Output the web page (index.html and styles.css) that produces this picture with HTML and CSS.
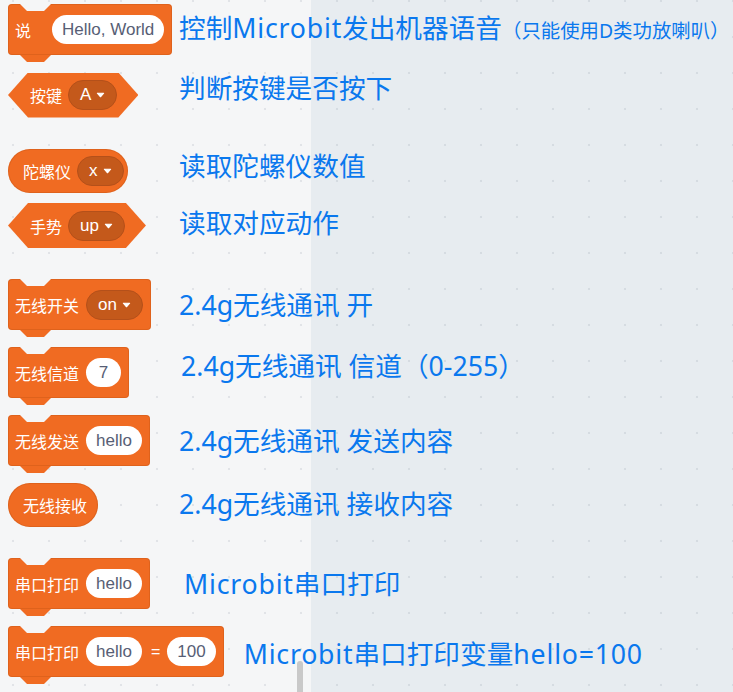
FILE: index.html
```html
<!DOCTYPE html>
<html lang="zh">
<head>
<meta charset="utf-8">
<title>Microbit blocks</title>
<link rel="stylesheet" href="styles.css">
</head>
<body>
<div class="scrollbar"></div>
<div class="stage">
  <div class="row">
    <div class="cell">
      <div class="block cmd"><span class="label say">说</span><span class="input">Hello, World</span></div>
    </div>
    <p class="desc">控制<span class="lat">Microbit</span>发出机器语音<small>（只能使用D类功放喇叭）</small></p>
  </div>

  <div class="row">
    <div class="cell">
      <div class="block bool"><span class="label">按键</span><span class="dd">A<svg class="caret" viewBox="0 0 10 6"><path d="M1.5 1h7L5 5z"/></svg></span></div>
    </div>
    <p class="desc lift-l">判断按键是否按下</p>
  </div>

  <div class="row far">
    <div class="cell">
      <div class="block rep"><span class="label">陀螺仪</span><span class="dd">x<svg class="caret" viewBox="0 0 10 6"><path d="M1.5 1h7L5 5z"/></svg></span></div>
    </div>
    <p class="desc lift">读取陀螺仪数值</p>
  </div>

  <div class="row near">
    <div class="cell">
      <div class="block bool"><span class="label">手势</span><span class="dd">up<svg class="caret" viewBox="0 0 10 6"><path d="M1.5 1h7L5 5z"/></svg></span></div>
    </div>
    <p class="desc lift-s">读取对应动作</p>
  </div>

  <div class="row far">
    <div class="cell">
      <div class="block cmd"><span class="label">无线开关</span><span class="dd">on<svg class="caret" viewBox="0 0 10 6"><path d="M1.5 1h7L5 5z"/></svg></span></div>
    </div>
    <p class="desc">2.4g无线通讯 开</p>
  </div>

  <div class="row">
    <div class="cell">
      <div class="block cmd"><span class="label">无线信道</span><span class="input">7</span></div>
    </div>
    <p class="desc lift-l nudge-s">2.4g无线通讯 信道（0-255）</p>
  </div>

  <div class="row">
    <div class="cell">
      <div class="block cmd"><span class="label">无线发送</span><span class="input">hello</span></div>
    </div>
    <p class="desc">2.4g无线通讯 发送内容</p>
  </div>

  <div class="row">
    <div class="cell">
      <div class="block rep solo"><span class="label">无线接收</span></div>
    </div>
    <p class="desc lift-xs">2.4g无线通讯 接收内容</p>
  </div>

  <div class="row far">
    <div class="cell">
      <div class="block cmd"><span class="label">串口打印</span><span class="input">hello</span></div>
    </div>
    <p class="desc nudge"><span class="lat">Microbit</span>串口打印</p>
  </div>

  <div class="row">
    <div class="cell wide">
      <div class="block cmd"><span class="label">串口打印</span><span class="input">hello</span><span class="eq">=</span><span class="input">100</span></div>
    </div>
    <p class="desc far-text drop"><span class="lat">Microbit</span>串口打印变量<span class="lat">hello=100</span></p>
  </div>
</div>
</body>
</html>
```

FILE: styles.css
```css
html, body {
  margin: 0;
  padding: 0;
}

body {
  width: 733px;
  height: 692px;
  overflow: hidden;
  position: relative;
  font-family: "Noto Sans CJK SC", sans-serif;
  background:
    radial-gradient(circle, rgba(120, 135, 150, 0.16) 0, rgba(120, 135, 150, 0.16) 1px, transparent 1.6px) -5px 19px / 36px 36px,
    linear-gradient(to right, #f5f6f7 0, #f5f6f7 311px, #e7ecf0 311px);
}

.scrollbar {
  position: absolute;
  left: 297px;
  top: 661px;
  width: 6px;
  height: 40px;
  background: #c9c9c9;
  border-radius: 3px;
}

.stage {
  position: relative;
  padding-top: 4px;
  display: flex;
  flex-direction: column;
}

.row {
  display: flex;
  align-items: center;
  margin-top: 17px;
}

.row:first-child {
  margin-top: 0;
}

.row.far {
  margin-top: 31px;
}

.row.near {
  margin-top: 10px;
}

.cell {
  width: 179px;
  flex-shrink: 0;
  box-sizing: border-box;
  padding-left: 8px;
  display: flex;
  align-items: center;
}

.cell.wide {
  width: auto;
}

.desc {
  margin: 0;
  color: #0a78ee;
  font-family: "Noto Sans", "Noto Sans CJK SC", sans-serif;
  font-size: 26.67px;
  line-height: 32px;
  white-space: nowrap;
}

.desc .lat {
  letter-spacing: 0.8px;
}

.desc small {
  font-size: 19.4px;
}

.desc.lift-l {
  margin-bottom: 14px;
}

.desc.lift {
  margin-bottom: 10px;
}

.desc.lift-s {
  margin-bottom: 6px;
}

.desc.lift-xs {
  margin-bottom: 2px;
}

.desc.drop {
  margin-top: 4px;
}

.desc.nudge {
  margin-left: 5px;
}

.desc.nudge-s {
  margin-left: 2px;
}

.desc.far-text {
  margin-left: 20px;
}

/* ---------- blocks ---------- */

.block {
  position: relative;
  display: inline-flex;
  align-items: center;
  flex: 0 0 auto;
  box-sizing: border-box;
  background: #f06b22;
  color: #fff;
  font-size: 16px;
  white-space: nowrap;
}

.label {
  margin-right: 6px;
  line-height: 1;
}

.cmd .label {
  margin-right: 7px;
}

.cmd .label.say {
  margin-right: 21px;
}

.rep.solo .label {
  margin-right: 0;
}

.cmd {
  height: 51px;
  border-radius: 4px;
  padding: 0 8px 0 7px;
  box-shadow: inset 0 0 0 1px rgba(170, 70, 10, 0.25);
}

.cmd::before,
.cmd::after {
  content: "";
  position: absolute;
  left: 12px;
  width: 31px;
  height: 7px;
  clip-path: polygon(0 0, 100% 0, calc(100% - 7px) 100%, 7px 100%);
}

.cmd::before {
  top: 0;
  background: #f5f6f7;
}

.cmd::after {
  bottom: -7px;
  background: #f06b22;
}

.bool {
  height: 45px;
  padding: 0 21px 0 22px;
  clip-path: polygon(0 50%, 20px 0, calc(100% - 20px) 0, 100% 50%, calc(100% - 20px) 100%, 20px 100%);
}

.rep {
  height: 44px;
  border-radius: 22px;
  padding: 0 4px 0 15px;
  box-shadow: inset 0 0 0 1px rgba(170, 70, 10, 0.25);
}

.rep.solo {
  padding-right: 11px;
}

.input {
  display: inline-flex;
  align-items: center;
  justify-content: center;
  box-sizing: border-box;
  height: 29px;
  min-width: 35px;
  padding: 0 10px;
  border-radius: 15px;
  background: #fff;
  color: #575e75;
  font-family: "Liberation Sans", Arial, sans-serif;
  font-size: 17px;
}

.dd {
  display: inline-flex;
  align-items: center;
  gap: 5px;
  box-sizing: border-box;
  height: 30px;
  padding: 0 11px;
  border-radius: 15px;
  background: #c4591b;
  border: 1px solid #b4501a;
  color: #fff;
  font-family: "Liberation Sans", Arial, sans-serif;
  font-size: 17px;
}

.caret {
  width: 9px;
  height: 6px;
}

.caret path {
  fill: #fff;
  stroke: #fff;
  stroke-width: 1.2;
  stroke-linejoin: round;
}

.eq {
  margin: 0 7px 0 9px;
  font-family: "Liberation Sans", Arial, sans-serif;
  font-size: 16px;
}
```
